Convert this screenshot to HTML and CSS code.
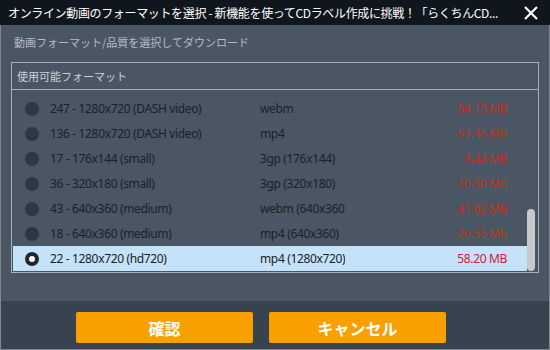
FILE: index.html
```html
<!DOCTYPE html>
<html lang="ja">
<head>
    <meta charset="UTF-8">
    <title>フォーマットを選択</title>
    <link rel="stylesheet" href="styles.css">
</head>
<body>
    <div class="window">
        <div class="titlebar">
            <span class="title">オンライン動画のフォーマットを選択 - 新機能を使ってCDラベル作成に挑戦！「らくちんCD...</span>
            <svg class="close" width="14" height="14" viewBox="0 0 14 14">
                <path d="M1 1 L13 13 M13 1 L1 13" stroke="#fff" stroke-width="2.2" fill="none"/>
            </svg>
        </div>
        <div class="content">
            <h2 class="heading">動画フォーマット/品質を選択してダウンロード</h2>
            <div class="panel">
                <div class="panel-head">使用可能フォーマット</div>
                <div class="list">
                    <div class="rows">
                        <div class="row"><span class="radio"></span><span class="name">247 - 1280x720 (DASH video)</span><span class="ext">webm</span><span class="size">54.15 MB</span></div>
                        <div class="row"><span class="radio"></span><span class="name">136 - 1280x720 (DASH video)</span><span class="ext">mp4</span><span class="size">52.45 MB</span></div>
                        <div class="row"><span class="radio"></span><span class="name">17 - 176x144 (small)</span><span class="ext">3gp (176x144)</span><span class="size">3.44 MB</span></div>
                        <div class="row"><span class="radio"></span><span class="name">36 - 320x180 (small)</span><span class="ext">3gp (320x180)</span><span class="size">10.50 MB</span></div>
                        <div class="row"><span class="radio"></span><span class="name">43 - 640x360 (medium)</span><span class="ext">webm (640x360)</span><span class="size">31.62 MB</span></div>
                        <div class="row"><span class="radio"></span><span class="name">18 - 640x360 (medium)</span><span class="ext">mp4 (640x360)</span><span class="size">20.55 MB</span></div>
                        <div class="row selected"><span class="radio"></span><span class="name">22 - 1280x720 (hd720)</span><span class="ext">mp4 (1280x720)</span><span class="size">58.20 MB</span></div>
                    </div>
                    <div class="scrollbar"><div class="thumb"></div></div>
                </div>
            </div>
        </div>
        <div class="footer">
            <button class="btn">確認</button>
            <button class="btn">キャンセル</button>
        </div>
    </div>
</body>
</html>
```

FILE: styles.css
```css
body {
    margin: 0;
    font-family: "Noto Sans", "Noto Sans CJK JP", sans-serif;
}
.window {
    width: 550px;
    height: 350px;
    box-sizing: border-box;
    border: 1px solid #7f8891;
    border-top: none;
    display: flex;
    flex-direction: column;
    background-color: #4a5663;
}
.titlebar {
    height: 25px;
    margin: 0 -1px;
    background-color: #10161d;
    display: flex;
    align-items: center;
    justify-content: space-between;
    padding: 0 12px 0 8px;
}
.title {
    color: #fff;
    font-size: 12px;
    letter-spacing: -0.35px;
    font-family: "Noto Sans CJK JP", sans-serif;
    white-space: nowrap;
}
.content {
    padding: 8px 10px 0 10px;
    height: 268px;
}
.heading {
    margin: 0 0 10px 3px;
    font-size: 11px;
    font-weight: normal;
    color: #b5bcc3;
    font-family: "Noto Sans CJK JP", sans-serif;
    line-height: 19px;
}
.panel {
    border: 1px solid #a8b0b8;
    height: 209px;
}
.panel-head {
    height: 26px;
    line-height: 26px;
    border-bottom: 1px solid #a8b0b8;
    padding-left: 5px;
    color: #cbd1d6;
    font-size: 11px;
    font-family: "Noto Sans CJK JP", sans-serif;
}
.list {
    display: flex;
    padding: 6px 1px 0 1px;
}
.rows {
    flex: 1;
}
.row {
    display: flex;
    align-items: center;
    height: 25px;
    padding: 0 20px 0 12px;
    font-size: 12px;
    letter-spacing: -0.35px;
    color: #1c2127;
}
.row.selected {
    background-color: #c4e2f9;
}
.radio {
    width: 14px;
    height: 14px;
    border-radius: 50%;
    background-color: #2f3841;
    margin-right: 11px;
    flex-shrink: 0;
    box-sizing: border-box;
}
.row.selected .radio {
    background-color: #fff;
    border: 4px solid #1f262d;
}
.name {
    width: 210px;
}
.ext {
    width: 85px;
    overflow: hidden;
    white-space: nowrap;
}
.size {
    flex: 1;
    text-align: right;
    color: #c0321e;
}
.row.selected .size {
    color: #d0202a;
}
.scrollbar {
    width: 10px;
    display: flex;
    flex-direction: column;
    justify-content: flex-end;
    padding-top: 112px;
}
.thumb {
    width: 8px;
    height: 62px;
    border-radius: 4px;
    background-color: #c8c8c8;
}
.footer {
    flex: 1;
    background-color: #37434f;
    display: flex;
    gap: 16px;
    padding: 11px 0 0 75px;
    align-items: flex-start;
}
.btn {
    width: 177px;
    height: 31px;
    border: none;
    border-radius: 2px;
    background-color: #f9a000;
    color: #fff;
    font-size: 16px;
    font-weight: bold;
    font-family: "Noto Sans CJK JP", sans-serif;
}
```
